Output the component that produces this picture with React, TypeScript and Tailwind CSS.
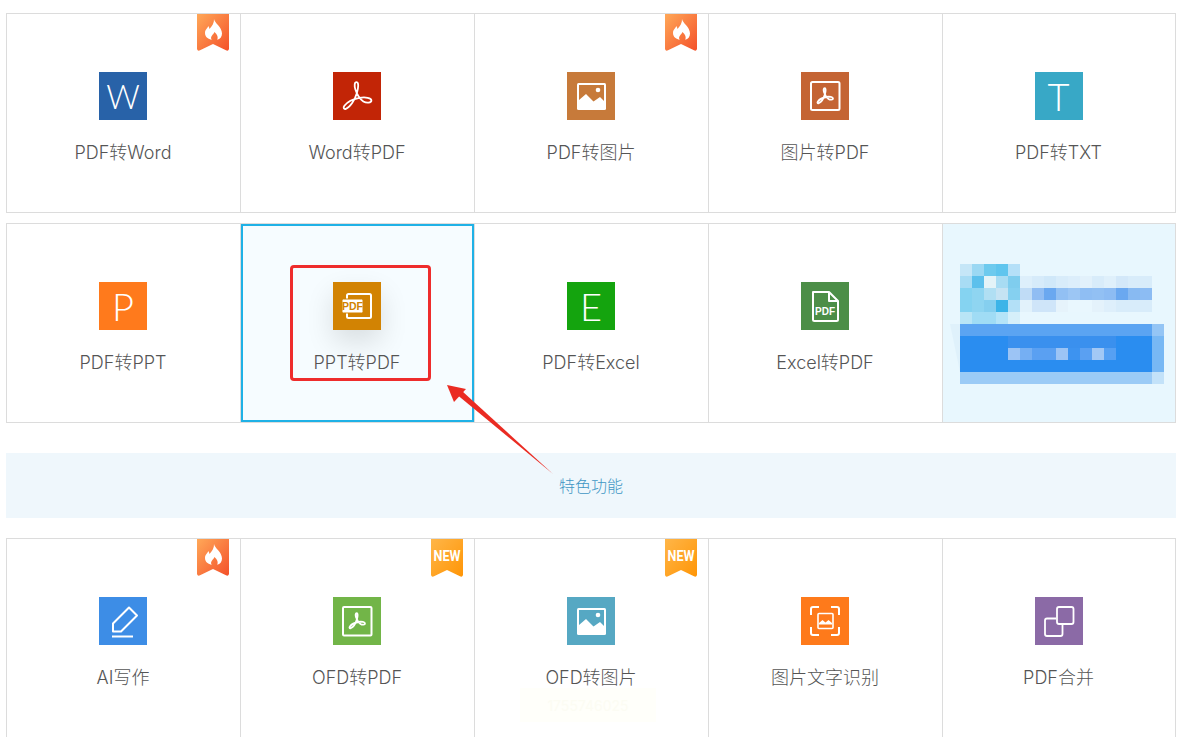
import React from "react";

const W = "#ffffff";

function Acro({ x = 0, y = 0, s = 1, sw = 1.8 }: { x?: number; y?: number; s?: number; sw?: number }) {
  return (
    <g transform={`translate(${x} ${y}) scale(${s})`}>
      <path
        d="M23.6 10.2c-2.2 0-2.4 3.2-1.2 7.2 1.6 5 4.6 9.6 8 12 3 1.9 8 1.7 8-.9s-6-3.7-12-2.6c-6 1.1-12 4-15 7.9-1.5 2-.5 3.7 1.5 3 4-1.5 9-8.8 11-15.800 1.500-5 2-10.800-.300-10.800z"
        fill="none"
        stroke={W}
        strokeWidth={sw / s}
      />
    </g>
  );
}

function ImageGlyph({ fill }: { fill: string }) {
  return (
    <svg viewBox="0 0 48 48" className="w-12 h-12">
      <rect x="10" y="11" width="29" height="27" rx="1.500" fill={W} />
      <path d="M12 13H37V29L33 25 26.500 29.500 19 22 12 28z" fill={fill} />
      <circle cx="31" cy="18" r="2.300" fill={W} />
    </svg>
  );
}

function Letter({ ch, size = "text-[36px]" }: { ch: string; size?: string }) {
  return <span className={`${size} font-light text-white leading-none font-['Lato','Open_Sans',sans-serif]`}>{ch}</span>;
}

const icons: Record<string, React.ReactNode> = {
  word: <Letter ch="W" size="text-[33px]" />,
  p2w: (
    <svg viewBox="0 0 48 48" className="w-12 h-12">
      <Acro />
    </svg>
  ),
  img: <ImageGlyph fill="#c77a3a" />,
  i2p: (
    <svg viewBox="0 0 48 48" className="w-12 h-12">
      <rect x="10" y="10" width="28.500" height="28" rx="1.500" fill="none" stroke={W} strokeWidth="2" />
      <Acro x={10.500} y={10.500} s={0.56} sw={1.800} />
    </svg>
  ),
  txt: <Letter ch="T" size="text-[38px]" />,
  ppt: <Letter ch="P" size="text-[38px]" />,
  p2p: (
    <svg viewBox="0 0 48 48" className="w-12 h-12">
      <rect x="14" y="12" width="24" height="24" rx="1.500" fill="none" stroke={W} strokeWidth="2" />
      <rect x="9" y="17" width="21" height="14" rx="1.500" fill={W} stroke="#d28303" strokeWidth="1" />
      <text x="19.500" y="28" textAnchor="middle" fontSize="10.500" fontWeight="700" fill="#d28303" fontFamily="Liberation Sans, sans-serif">PDF</text>
    </svg>
  ),
  excel: <Letter ch="E" size="text-[38px]" />,
  e2p: (
    <svg viewBox="0 0 48 48" className="w-12 h-12">
      <path d="M12 10h16l9 9v18.500a1.500 1.500 0 0 1-1.500 1.500h-22a1.500 1.500 0 0 1-1.500-1.500zM28 10v9h9" fill="none" stroke={W} strokeWidth="2" strokeLinejoin="round" />
      <text x="24" y="33" textAnchor="middle" fontSize="10" fontWeight="700" fill={W} fontFamily="Liberation Sans, sans-serif">PDF</text>
    </svg>
  ),
  ai: (
    <svg viewBox="0 0 48 48" className="w-12 h-12">
      <path d="M14 34.500V26.500L30 10.500l8 8-16 16z" fill="none" stroke={W} strokeWidth="2" strokeLinejoin="round" />
      <path d="M13 39.500h21" stroke={W} strokeWidth="2" />
    </svg>
  ),
  ofdp: (
    <svg viewBox="0 0 48 48" className="w-12 h-12">
      <rect x="10" y="10" width="28.500" height="28.500" rx="1" fill="none" stroke={W} strokeWidth="2" />
      <Acro x={10.500} y={10.500} s={0.56} sw={1.800} />
    </svg>
  ),
  ofdi: <ImageGlyph fill="#56a8c3" />,
  ocr: (
    <svg viewBox="0 0 48 48" className="w-12 h-12">
      <path d="M18 10h-6a2 2 0 0 0-2 2v6M30 10h6a2 2 0 0 1 2 2v6M18 38h-6a2 2 0 0 1-2-2v-6M30 38h6a2 2 0 0 0 2-2v-6" fill="none" stroke={W} strokeWidth="2" />
      <rect x="17" y="16.500" width="15" height="15" rx="1" fill="none" stroke={W} strokeWidth="1.600" />
      <path d="M18 26l3.500-3 3 2.500 3-2.500 3.500 3v1.500H18z" fill={W} />
    </svg>
  ),
  merge: (
    <svg viewBox="0 0 48 48" className="w-12 h-12">
      <rect x="22" y="10" width="16.500" height="17" rx="2" fill="none" stroke={W} strokeWidth="1.800" />
      <path d="M21 21.500H12a2 2 0 0 0-2 2V37a2 2 0 0 0 2 2h13.500a2 2 0 0 0 2-2V27" fill="none" stroke={W} strokeWidth="1.800" />
    </svg>
  ),
};

function Fire() {
  return (
    <svg viewBox="0 0 32 37" className="absolute top-0 left-[190px] w-8 h-[37px]">
      <defs>
        <linearGradient id="fg" x1="0" y1="0" x2="1" y2="1">
          <stop offset="0" stopColor="#ffa858" />
          <stop offset="1" stopColor="#f4512a" />
        </linearGradient>
      </defs>
      <path d="M0 0h32v34.500c0 1.500-1 2.500-2.500 2L16 30 2.500 36.500c-1.500.5-2.500-.5-2.500-2z" fill="url(#fg)" />
      <path d="M17 5c.5 4 8 8 8 14.500 0 3.500-2 5.500-4.800 6.300 1.200-2.300.3-5-2.700-7.800-.6 2.200-5 4.500-2.800 7.800C11.700 25 8 23.500 8 19c0-3.500 2.300-4.500 3.300-7 .7 1.200 1 2 1.200 3C15 12 17.300 9 17 5z" fill={W} />
    </svg>
  );
}

function New() {
  return (
    <div className="absolute top-0 left-[190px] w-8 h-[38px]">
      <svg viewBox="0 0 32 38" className="w-8 h-[38px]">
        <defs>
          <linearGradient id="ng" x1="0" y1="0" x2="1" y2="1">
            <stop offset="0" stopColor="#ffb648" />
            <stop offset="1" stopColor="#ff9506" />
          </linearGradient>
        </defs>
        <path d="M0 0h32v35.500c0 1.500-1 2.500-2.500 2L16 31 2.500 37.500c-1.500.5-2.500-.5-2.500-2z" fill="url(#ng)" />
        <text x="16" y="21.500" textAnchor="middle" fontSize="14" fontWeight="700" fill={W} fontFamily="Roboto, sans-serif" textLength="27" lengthAdjust="spacingAndGlyphs">NEW</text>
      </svg>
    </div>
  );
}

type CellT = { label: string; icon: string; color: string; badge?: "fire" | "new"; selected?: boolean };

function Cell({ c, last }: { c: CellT; last: boolean }) {
  return (
    <div className={`relative w-[234px] h-full border-l border-[#dcdcdc] pr-px pt-[58px] flex flex-col items-center ${last ? "border-r pr-0" : ""}`}>
      {c.selected && <div className="absolute inset-0 border-2 border-[#1fb1e6] bg-[#f6fcff]" />}
      {c.badge === "fire" && <Fire />}
      {c.badge === "new" && <New />}
      <div
        className={`relative w-12 h-12 flex items-center justify-center ${c.selected ? "shadow-[0_12px_28px_rgba(0,0,0,0.12)]" : ""}`}
        style={{ backgroundColor: c.color }}
      >
        {icons[c.icon]}
      </div>
      <div className="relative mt-[21px] text-[18px] font-light leading-6 text-[#555555] whitespace-nowrap">{c.label}</div>
      {c.selected && <div className="absolute left-[49px] top-[41px] w-[141px] h-[116px] border-[3px] border-[#ee2c2c] rounded-[4px]" />}
    </div>
  );
}

const row1: CellT[] = [
  { label: "PDF转Word", icon: "word", color: "#2862a8", badge: "fire" },
  { label: "Word转PDF", icon: "p2w", color: "#c22506" },
  { label: "PDF转图片", icon: "img", color: "#c77a3a", badge: "fire" },
  { label: "图片转PDF", icon: "i2p", color: "#c46434" },
  { label: "PDF转TXT", icon: "txt", color: "#38a8c6" },
];
const row2: CellT[] = [
  { label: "PDF转PPT", icon: "ppt", color: "#ff7a1c" },
  { label: "PPT转PDF", icon: "p2p", color: "#d28303", selected: true },
  { label: "PDF转Excel", icon: "excel", color: "#14a40e" },
  { label: "Excel转PDF", icon: "e2p", color: "#4c8e47" },
];
const row3: CellT[] = [
  { label: "AI写作", icon: "ai", color: "#3d8de6", badge: "fire" },
  { label: "OFD转PDF", icon: "ofdp", color: "#72b548", badge: "new" },
  { label: "OFD转图片", icon: "ofdi", color: "#56a8c3", badge: "new" },
  { label: "图片文字识别", icon: "ocr", color: "#fe7a1b" },
  { label: "PDF合并", icon: "merge", color: "#8b6aa6" },
];

const B = "#2a8df0";
const mosaic: string[][] = [
  ["#c5e6f7", "#9bd8f3", "#6dcaee", "#5fc5ee", "#b5e0f8"],
  ["#a8dcf4", "#5cc0ec", "#e3f3f8", "#a8dcf3", "#7fcdee", "#ddeffb", "#d6ebfa", "#d0e8f9", "#d8ecfa", "#dceefb", "#e2f1fb", "#d8ecfa", "#dff0fb", "#d3e8f9", "#d8ecfa", "#d8ecfa"],
  ["#85d3f1", "#8fd5f1", "#b0dff3", "#c5e3f3", "#85d0f0", "#c0dcf6", "#90bdf3", "#6aa8f0", "#92c0f3", "#9cc6f4", "#8fbef3", "#92c0f3", "#8dbcf3", "#6aa8f0", "#88baf2", "#8cbcf3"],
  ["#85d3f1", "#8fd5f1", "#85cfef", "#3cb4e8", "#b3e0f7", "#e2f2fb", "#cfe5f9", "#cfe5f9", "#e6f3fb", "#e9f7fe", "#e9f7fe", "#e4f2fb", "#deeffb", "#d8ecfa", "#d8ecfa", "#d8ecfa"],
  ["#b9e5f6", "#a0dcf5", "#a0dcf5", "#b5e4f8", "#d5effa"],
  [...Array(16).fill("#5ba4f2"), "#94c5f5"],
  [B, B, B, B, "#3a90ee", "#3a90ee", "#3a90ee", "#3a90ee", "#3a90ee", "#3a90ee", "#3a90ee", "#3a90ee", "#3a90ee", B, B, B, "#78b8f4"],
  [B, B, B, B, "#9cc4f5", "#75aff3", "#5aa0f2", "#5aa0f2", "#9cc4f5", "#3d93f0", "#5aa0f2", "#a3c8f5", "#56a0f3", B, B, B, "#78b8f4"],
  [...Array(16).fill(B), "#78b8f4"],
  [...Array(16).fill("#9bcbf6"), "#c3e2f9"],
];

function AdCell() {
  return (
    <div className="relative w-[234px] h-full border-x border-[#dcdcdc] bg-[#e8f7fe] pt-10 pl-[7px]">
      <svg width="214" height="120" viewBox="-10 0 214 120" className="block">
        <polygon points="-10,60 0,60 0,108" fill="#dff1fb" />
        {mosaic.map((r, y) => r.map((c, x) => <rect key={`${x}-${y}`} x={x * 12} y={y * 12} width="12" height="12" fill={c} />))}
      </svg>
    </div>
  );
}

function Row({ cells, ad, cut }: { cells: CellT[]; ad?: boolean; cut?: boolean }) {
  return (
    <div className={`flex h-[200px] shrink-0 border-t border-[#dcdcdc] ${cut ? "" : "border-b"}`}>
      {cells.map((c, i) => (
        <Cell key={c.label} c={c} last={!ad && i === cells.length - 1} />
      ))}
      {ad && <AdCell />}
    </div>
  );
}

export default function App() {
  return (
    <div className="relative w-[1178px] h-[737px] overflow-hidden bg-white pl-[6px] pt-[13px] font-['Inter','Noto_Sans_CJK_SC',sans-serif]">
      <div className="w-[1170px] flex flex-col">
        <Row cells={row1} />
        <div className="mt-[10px]">
          <Row cells={row2} ad />
        </div>
        <div className="mt-[30px] h-[65px] bg-[#eff7fc] flex items-center justify-center text-[16px] font-light text-[#3f96c4]">特色功能</div>
        <div className="mt-5">
          <Row cells={row3} cut />
        </div>
      </div>
      <div className="absolute left-[520px] top-[688px] w-[136px] h-[34px] bg-[#fffffa] flex items-center justify-center text-[14px] text-[#fcfcf3]">1755746025</div>
      <svg className="absolute left-[440px] top-[378px]" width="120" height="100" viewBox="440 378 120 100">
        <polygon points="553,474 458,395.500 462,391" fill="#ea2b22" />
        <polygon points="447,385 466,389 454,402" fill="#ea2b22" />
      </svg>
    </div>
  );
}
